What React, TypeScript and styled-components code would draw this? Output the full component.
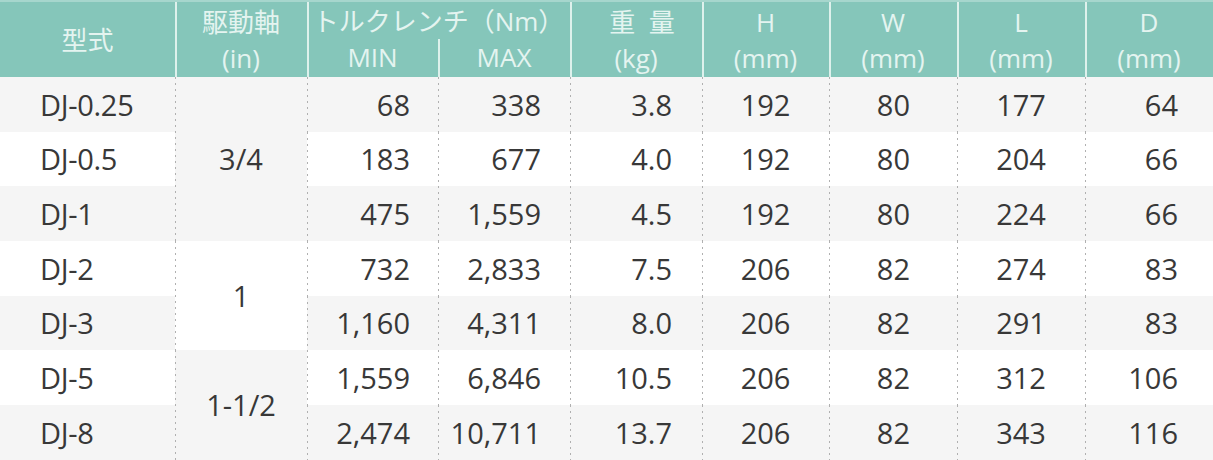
import React from 'react';
import styled, {createGlobalStyle, css} from 'styled-components';

const GlobalStyle = createGlobalStyle`
	html, body {
		margin: 0;
		padding: 0;
		background: #ffffff;
	}
	body {
		font-family: "Open Sans", "Noto Sans CJK JP", sans-serif;
	}
`;

const teal = '#85c6ba';
const headLine = '#def1ec';
const headText = '#e4f4f0';
const stripe = '#f5f5f5';
const dot = '#b0b0b0';

const Table = styled.table`
	width: 1213px;
	table-layout: fixed;
	border-collapse: separate;
	border-spacing: 0;
	font-family: "Open Sans", "Noto Sans CJK JP", sans-serif;
`;

const HeadRow = styled.tr<{$h: number}>`
	height: ${p => p.$h}px;
`;

const Th = styled.th<{$first?: boolean; $top?: boolean; $shift?: number}>`
	padding: 0 0 0 ${p => p.$shift ?? 0}px;
	font-size: 26px;
	font-weight: 400;
	line-height: 36px;
	color: ${headText};
	text-align: center;
	vertical-align: middle;
	white-space: nowrap;
	background: ${p => p.$first
		? teal
		: `linear-gradient(${headLine}, ${headLine}) left top / 2px 100% no-repeat, ${teal}`};
	${p => p.$top && css`
		border-top: 2px solid #a6d6cd;
	`}
`;

const SubTh = styled(Th)`
	padding-bottom: 2px;
`;

// the weight unit sits a little left of the spaced-out 重 量
const Unit = styled.span`
	margin-left: -12px;
`;

const BodyRow = styled.tr<{$h: number; $shade: boolean}>`
	height: ${p => p.$h}px;
	background: ${p => (p.$shade ? stripe : '#ffffff')};
`;

const Td = styled.td<{$first?: boolean; $align?: string; $pad?: number; $shade?: boolean}>`
	padding: 0 ${p => p.$pad ?? 0}px 0 ${p => (p.$first ? 40 : 0)}px;
	font-size: 29px;
	line-height: 36px;
	color: #383838;
	text-align: ${p => p.$align ?? 'right'};
	vertical-align: middle;
	white-space: nowrap;
	background: ${p => p.$first
		? 'transparent'
		: `linear-gradient(${dot} 0 2px, transparent 2px) left top / 1px 6px repeat-y${
			p.$shade === undefined ? '' : p.$shade ? `, ${stripe}` : ', #ffffff'}`};
`;

const Model = styled.span`
	letter-spacing: -0.3px;
`;

interface Row {
	model: string;
	min: string;
	max: string;
	kg: string;
	h: number;
	w: number;
	l: number;
	d: number;
}

const rows: Row[] = [
	{model: 'DJ-0.25', min: '68', max: '338', kg: '3.8', h: 192, w: 80, l: 177, d: 64},
	{model: 'DJ-0.5', min: '183', max: '677', kg: '4.0', h: 192, w: 80, l: 204, d: 66},
	{model: 'DJ-1', min: '475', max: '1,559', kg: '4.5', h: 192, w: 80, l: 224, d: 66},
	{model: 'DJ-2', min: '732', max: '2,833', kg: '7.5', h: 206, w: 82, l: 274, d: 83},
	{model: 'DJ-3', min: '1,160', max: '4,311', kg: '8.0', h: 206, w: 82, l: 291, d: 83},
	{model: 'DJ-5', min: '1,559', max: '6,846', kg: '10.5', h: 206, w: 82, l: 312, d: 106},
	{model: 'DJ-8', min: '2,474', max: '10,711', kg: '13.7', h: 206, w: 82, l: 343, d: 116},
];

// drive shaft cells span several rows
const drive: {[index: number]: {label: string; span: number; shade: boolean}} = {
	0: {label: '3/4', span: 3, shade: true},
	3: {label: '1', span: 2, shade: false},
	5: {label: '1-1/2', span: 2, shade: true},
};

const rowHeights = [55, 54, 55, 55, 54, 55, 55];
const widths = [175, 132, 131, 132, 132, 127, 128, 128, 128];

export default function App() {
	return (
		<>
			<GlobalStyle/>
			<Table>
				<colgroup>
					{widths.map((w, i) => <col key={i} width={w}/>)}
				</colgroup>
				<thead>
					<HeadRow $h={39}>
						<Th $first $top rowSpan={2}>型式</Th>
						<Th $top rowSpan={2}>駆動軸<br/>(in)</Th>
						<Th $top colSpan={2}>トルクレンチ（Nm）</Th>
						<Th $top $shift={12} rowSpan={2}>重&nbsp;&nbsp;量<br/><Unit>(kg)</Unit></Th>
						<Th $top rowSpan={2}>H<br/>(mm)</Th>
						<Th $top rowSpan={2}>W<br/>(mm)</Th>
						<Th $top rowSpan={2}>L<br/>(mm)</Th>
						<Th $top rowSpan={2}>D<br/>(mm)</Th>
					</HeadRow>
					<HeadRow $h={38}>
						<SubTh>MIN</SubTh>
						<SubTh>MAX</SubTh>
					</HeadRow>
				</thead>
				<tbody>
					{rows.map((r, i) => (
						<BodyRow key={r.model} $h={rowHeights[i]} $shade={i % 2 === 0}>
							<Td $first $align="left"><Model>{r.model}</Model></Td>
							{drive[i] && (
								<Td rowSpan={drive[i].span} $align="center" $shade={drive[i].shade}>
									{drive[i].label}
								</Td>
							)}
							<Td $pad={28}>{r.min}</Td>
							<Td $pad={29}>{r.max}</Td>
							<Td $pad={30}>{r.kg}</Td>
							<Td $align="center">{r.h}</Td>
							<Td $pad={47}>{r.w}</Td>
							<Td $align="center">{r.l}</Td>
							<Td $pad={35}>{r.d}</Td>
						</BodyRow>
					))}
				</tbody>
			</Table>
		</>
	);
}
